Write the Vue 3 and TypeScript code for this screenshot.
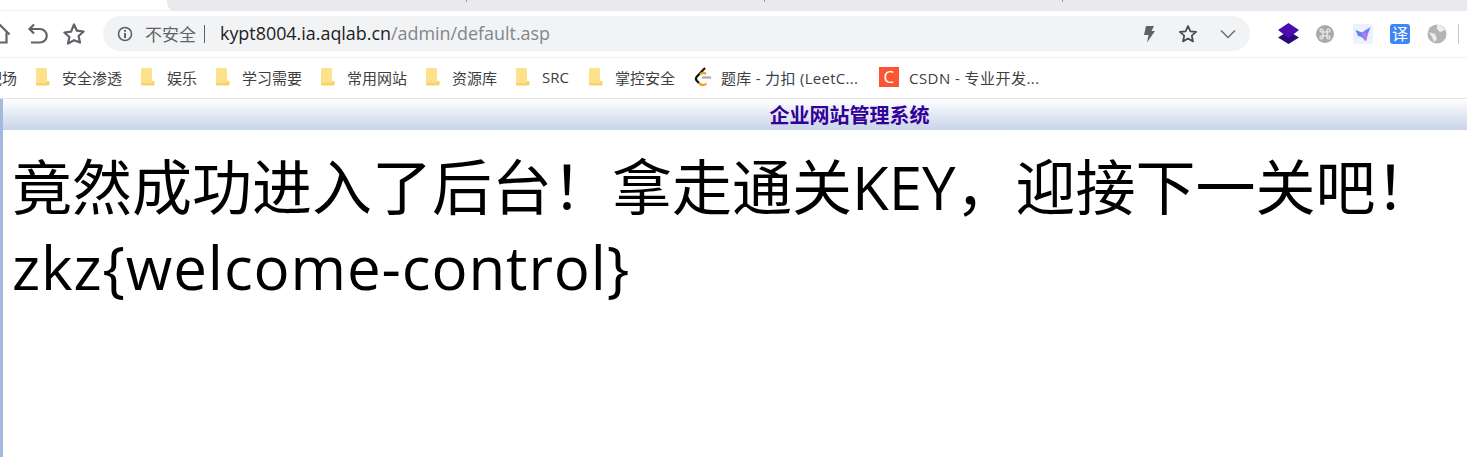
<script setup lang="ts">
const folders = [
  { label: '安全渗透', width: 105 },
  { label: '娱乐', width: 75 },
  { label: '学习需要', width: 105 },
  { label: '常用网站', width: 105 },
  { label: '资源库', width: 90 },
  { label: 'SRC', width: 73 },
  { label: '掌控安全', width: 105 },
]
</script>

<template>
  <div class="window">
    <div class="tabstrip">
      <div class="tabs">
        <span class="tab-sep"></span>
        <span class="tab-sep"></span>
        <span class="tab-sep"></span>
      </div>
    </div>

    <div class="toolbar">
      <div class="nav">
        <svg width="22" height="22" viewBox="0 0 22 22" fill="none" stroke="#5f6368" stroke-width="2.200">
          <path d="M1 11.500 11 2l9.500 9.500" />
          <path d="M4.500 9.500V19.500h13V9.500" />
        </svg>
        <svg width="22" height="22" viewBox="0 0 22 22" fill="none" stroke="#5f6368" stroke-width="2.200">
          <path d="M8 1.500 3.500 6 8 10.500" />
          <path d="M3.500 6H14a5.800 5.800 0 0 1 0 13.500H5" />
        </svg>
        <svg width="22" height="22" viewBox="0 0 22 22" fill="none" stroke="#5f6368" stroke-width="2.200" stroke-linejoin="round">
          <path d="m11 1.500 2.900 6.200 6.700.8-5 4.500 1.400 6.600L11 17.200 5 20.600l1.400-6.600-5-4.500 6.700-.8z" />
        </svg>
      </div>

      <div class="omnibox">
        <svg width="16" height="16" viewBox="0 0 16 16" fill="none" stroke="#5f6368">
          <circle cx="8" cy="8" r="6.500" stroke-width="1.600" />
          <path d="M8 7v5" stroke-width="2" />
          <path d="M8 4v1.800" stroke-width="2" />
        </svg>
        <span class="insecure">不安全</span>
        <span class="sep"></span>
        <span class="url"><span class="host">kypt8004.ia.aqlab.cn</span><span class="path">/admin/default.asp</span></span>
        <div class="omni-actions">
          <svg width="14" height="18" viewBox="0 0 14 18" fill="#5f6368">
            <path d="M4 1h8L9.500 6H13L5 17.500 6.500 10H2z" />
          </svg>
          <svg width="20" height="20" viewBox="0 0 20 20" fill="none" stroke="#4a4d52" stroke-width="1.800" stroke-linejoin="round">
            <path d="m10 2 2.400 5.300 5.700.6-4.300 3.800 1.200 5.700-5-2.900-5 2.900 1.200-5.700-4.300-3.800 5.700-.6z" />
          </svg>
          <svg width="16" height="10" viewBox="0 0 16 10" fill="none" stroke="#6b6e73" stroke-width="1.500">
            <path d="m1 1.500 7 7 7-7" />
          </svg>
        </div>
      </div>

      <div class="extensions">
        <svg width="21" height="21" viewBox="0 0 21 21">
          <path d="M10.500 8 21 14.500 10.500 21 0 14.500z" fill="#2b0a78" />
          <path d="M10.500 0 21 7 10.500 15 0 7z" fill="#4a0db0" />
        </svg>
        <svg class="cmd" width="18" height="18" viewBox="0 0 18 18">
          <circle cx="9" cy="9" r="9" fill="#a9a9a9" />
          <path
            d="M7 7h4v4H7zM7 7H5.500A1.500 1.500 0 1 1 7 5.500zM11 7V5.500A1.500 1.500 0 1 1 12.500 7zM11 11h1.500A1.500 1.500 0 1 1 11 12.500zM7 11v1.500A1.500 1.500 0 1 1 5.500 11z"
            fill="none"
            stroke="#f4f4f4"
            stroke-width="1.100"
          />
        </svg>
        <svg width="20" height="20" viewBox="0 0 20 20">
          <rect width="20" height="20" rx="2" fill="#eef0fd" />
          <path d="M2.500 6 9 8.500l8.500-5.500-3 8-2.500 5-3.500-3L5 12z" fill="#5f86f2" />
          <path d="M9 8.500 15 9l-1.500 7.500-1.500.5-3-5z" fill="#a77df3" />
        </svg>
        <div class="translate">译</div>
        <svg width="20" height="20" viewBox="0 0 20 20">
          <circle cx="10" cy="10" r="9.500" fill="#b4b4b4" />
          <path d="M10 1a9 9 0 0 1 8 5l-5 2-3-3zM2 8l6 2 2 5-3 3-2-5z" fill="#ededed" />
        </svg>
        <span class="ext-sep"></span>
      </div>
    </div>

    <div class="bookmarks">
      <span class="cut">靶场</span>
      <span v-for="f in folders" :key="f.label" class="bookmark" :style="{ width: f.width + 'px' }">
        <svg width="16" height="20" viewBox="0 0 16 20">
          <path d="M1 2a1 1 0 0 1 1-1h9l1 1v15H2a1 1 0 0 1-1-1z" fill="#fde18c" />
          <path d="M12 14h2.500v3.500a1 1 0 0 1-1 1H2a1 1 0 0 1-1-1V16h11z" fill="#f8d363" />
        </svg>
        <span>{{ f.label }}</span>
      </span>
      <span class="bookmark leet">
        <svg width="20" height="20" viewBox="0 0 20 20" fill="none" stroke-width="2.200">
          <path d="M12 1 3.500 10c-1 1.500-.5 3 .5 4l2 2" stroke="#111" />
          <path d="M6 16c2 2.500 5 2.500 7.500.5" stroke="#f0a020" />
          <path d="M9 10.500h9" stroke="#aaa" />
          <path d="M7 7.500c2-2 4-2 6-.5" stroke="#f0a020" />
        </svg>
        <span>题库 - 力扣 (LeetC...</span>
      </span>
      <span class="bookmark csdn">
        <span class="csdn-logo">C</span>
        <span>CSDN - 专业开发...</span>
      </span>
    </div>

    <div class="page">
      <div class="banner">企业网站管理系统</div>
      <div class="content">
        <p>竟然成功进入了后台！拿走通关KEY，迎接下一关吧！</p>
        <p class="key">zkz{welcome-control}</p>
      </div>
    </div>
  </div>
</template>

<style>
html,
body {
  margin: 0;
  background: #fff;
  overflow: hidden;
}
</style>

<style scoped>
.window {
  width: 1467px;
  height: 457px;
  display: flex;
  flex-direction: column;
  overflow: hidden;
  font-family: "Open Sans", "Noto Sans CJK SC", sans-serif;
}

.tabstrip {
  height: 11px;
  box-sizing: border-box;
  padding-left: 167px;
  border-bottom: 1px solid #f1f1f3;
}

.tabs {
  height: 11px;
  background: #e8eaed;
  border-bottom-left-radius: 8px;
  display: flex;
  gap: 297px;
  padding-left: 299px;
}

.tab-sep {
  width: 1px;
  height: 2px;
  background: #9a9ca0;
}

.toolbar {
  height: 47px;
  box-sizing: border-box;
  padding-bottom: 1px;
  display: flex;
  align-items: center;
  border-bottom: 1px solid #f1f1f3;
}

.nav {
  width: 114px;
  flex: none;
  margin-left: -11px;
  display: flex;
  align-items: center;
  gap: 15px;
}

.omnibox {
  width: 1147px;
  flex: none;
  height: 35px;
  box-sizing: border-box;
  border-radius: 18px;
  background: #f1f3f4;
  display: flex;
  align-items: center;
  padding-left: 14px;
  padding-right: 14px;
}

.insecure {
  margin-left: 12px;
  font-size: 17px;
  color: #5f6368;
}

.sep {
  width: 1px;
  height: 18px;
  background: #5f6368;
  margin: 0 15px 0 8px;
}

.url {
  font-size: 17.900px;
  margin-top: -2px;
}

.host {
  color: #202124;
}

.path {
  color: #80868b;
}

.omni-actions {
  margin-left: auto;
  display: flex;
  align-items: center;
  gap: 22px;
}

.extensions {
  flex: 1;
  display: flex;
  align-items: center;
  gap: 17px;
  padding-left: 28px;
}

.cmd {
  margin-right: 2px;
}

.translate {
  width: 20px;
  height: 20px;
  border-radius: 3px;
  background: #3d86f5;
  color: #fff;
  font-size: 16px;
  line-height: 20px;
  text-align: center;
}

.ext-sep {
  width: 1px;
  height: 20px;
  background: #c8c8c8;
  margin-left: -6px;
}

.bookmarks {
  height: 41px;
  box-sizing: border-box;
  padding-bottom: 2px;
  display: flex;
  align-items: center;
  border-bottom: 1px solid #e4e4e4;
  font-size: 15px;
  color: #3c4043;
  overflow: hidden;
}

.cut {
  width: 48px;
  flex: none;
  margin-left: -13px;
}

.bookmark {
  flex: none;
  display: flex;
  align-items: center;
  gap: 11px;
}

.leet {
  width: 186px;
  gap: 8px;
  letter-spacing: 0.300px;
}

.csdn {
  gap: 10px;
  letter-spacing: 0.450px;
}

.csdn-logo {
  width: 20px;
  height: 20px;
  background: #fc5531;
  color: #fff;
  font-size: 17px;
  line-height: 20px;
  text-align: center;
}

.page {
  flex: 1;
  border-left: 3px solid #a5b9dd;
}

.banner {
  height: 31px;
  box-sizing: border-box;
  padding-left: 229px;
  text-align: center;
  background: linear-gradient(#ffffff, #c8d4e8);
  color: #330099;
  font-size: 20px;
  font-weight: 700;
  line-height: 33px;
}

.content {
  padding: 17px 0 0 9px;
  color: #000;
  font-size: 60px;
  line-height: 80px;
}

.content p {
  margin: 0;
  white-space: nowrap;
}

.key {
  letter-spacing: 0.900px;
}
</style>
